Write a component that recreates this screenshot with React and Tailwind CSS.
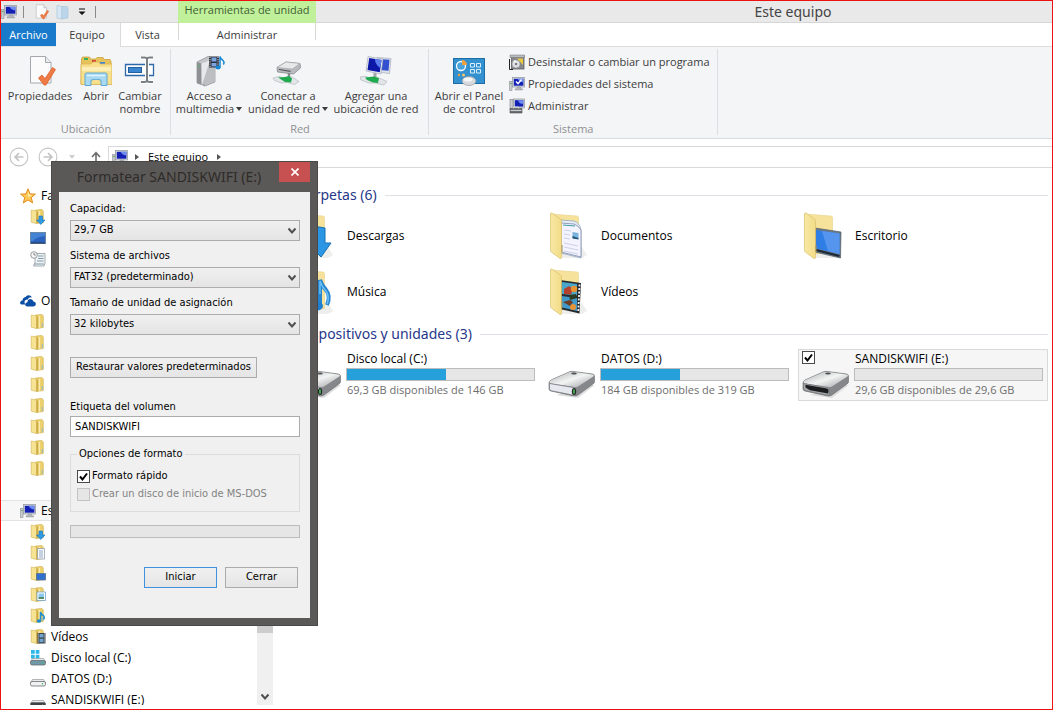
import React, { useState } from "react";

/* ---------- icons ---------- */

function ComputerIcon({ className = "h-4 w-4", children }) {
  return (
    <svg viewBox="0 0 16 16" className={className}>
      <rect x="0.5" y="5.5" width="2.5" height="9" fill="#c9ccd0" stroke="#8b8f94" strokeWidth="0.6" />
      <rect x="1" y="7" width="1.5" height="1" fill="#4caf50" />
      <rect x="3.5" y="1.5" width="12" height="9.5" fill="#d5d9de" stroke="#8e949b" strokeWidth="0.7" />
      <path d="M4.8 2.8h9.6v6.9H4.8z" fill="#1420b4" />
      <path d="M8.5 2.8h5.9v3.4c-3 .2-4.400-.8-5.900-3.400z" fill="#6f8df0" />
      <path d="M8 11h3.500v1.800h2V14h-7.500v-1.200H8z" fill="#b4b8bd" stroke="#83888e" strokeWidth="0.4" />
      {children}
    </svg>
  );
}

function PropertiesIcon({ className }) {
  return (
    <svg viewBox="0 0 32 32" className={className}>
      <path d="M6.500 1.500h15l5.500 6v20.500h-20.500z" fill="#fbfbfc" stroke="#a5a8ac" />
      <path d="M21.500 1.500v6H27" fill="#e8eaec" stroke="#a5a8ac" />
      <path d="M14.500 23l3.500-3 3 3.600L28.500 12.500l3 2L22 30h-2z" fill="#ee7a45" stroke="#d9622d" strokeWidth="0.8" />
    </svg>
  );
}

function OpenIcon() {
  return (
    <svg viewBox="0 0 32 32" className="h-8 w-8">
      <path d="M1.500 4l1-2h7l1 2h5.500l1-1.500h6l1 2h6l1 2V29H1z" fill="#e8c35c" stroke="#c99f3d" strokeWidth="0.8" />
      <rect x="4" y="3" width="4" height="2" fill="#35b35c" />
      <rect x="12" y="5" width="4" height="2" fill="#d8483f" />
      <rect x="20" y="7" width="5" height="2" fill="#3d84d8" />
      <path d="M1 9h10l2-2h6l1 2h12v20.500H1z" fill="#f8df8b" stroke="#d8b456" strokeWidth="0.8" />
      <path d="M2 12h29v4H2z" fill="#fdeeb5" />
      <path d="M5 30.500V19.500q0-1.500 1.500-1.500h19q1.500 0 1.500 1.500v11h-6V25q-5-1.500-10 0v5.500z" fill="#a9d9f2" stroke="#5fa9d4" />
      <path d="M7 20.500h18" stroke="#dff3fd" strokeWidth="1.500" />
    </svg>
  );
}

function RenameIcon() {
  return (
    <svg viewBox="0 0 32 32" className="h-8 w-8">
      <path d="M1.500 9.500h28v11h-28z" fill="#fff" stroke="#2f6aa8" strokeWidth="1.300" />
      <rect x="4.500" y="12.500" width="13" height="5" fill="#3b86d0" stroke="#215f9f" />
      <path d="M17 3h3.500q2 0 2.500 1.500Q23.500 3 25.500 3H29M23 4.500v21M17 27h3.500q2 0 2.500-1.500.5 1.500 2.500 1.500H29" fill="none" stroke="#fff" strokeWidth="4" />
      <path d="M17 2.500h3.500q2 0 2.500 1.500Q23.500 2.500 25.500 2.500H29M23 4v22M17 27h3.500q2 0 2.500-1.500.5 1.500 2.500 1.500H29" fill="none" stroke="#7a7f84" strokeWidth="2" />
    </svg>
  );
}

function MediaIcon() {
  return (
    <svg viewBox="0 0 32 32" className="h-8 w-8">
      <path d="M4 7l11-5.500 7 2V27l-10 4L4 28z" fill="#c3c5c8" stroke="#8a8c8f" strokeWidth="0.7" />
      <path d="M4 7l4.500 1.500L12 30.500 4 28z" fill="#8e9093" />
      <path d="M8.500 8.500L22 3.500V26.500L9 30z" fill="#bcbec1" />
      <path d="M8.500 8.500L17 5.300 10 27l-1.500 3z" fill="#e6e8e9" />
      <path d="M5.500 10v1.500" stroke="#38c95a" strokeWidth="1.200" />
      <rect x="16" y="1.500" width="10" height="11" fill="#2b2f3a" />
      <path d="M18.500 2.500h5v4h-5zM18.500 8h5v3.500h-5z" fill="#7aa3e0" />
      <path d="M17 2v10M25 2v10" stroke="#fff" strokeDasharray="1 1.200" />
      <path d="M27 12.500V1.500q.5 2.800 3 4 1.800 1.500.3 4" fill="none" stroke="#1689d6" strokeWidth="1.500" />
      <ellipse cx="25" cy="12.500" rx="2.600" ry="2" fill="#1689d6" />
    </svg>
  );
}

function NetDriveIcon() {
  return (
    <svg viewBox="0 0 32 32" className="h-8 w-8">
      <path d="M5 12.500L14 7l14 1.500.5 4.500-7 6L5.500 17z" fill="#b8babd" stroke="#7d8083" strokeWidth="0.7" />
      <path d="M5 12.500L14 7l14 1.500-7.500 5.500z" fill="#e6e8ea" stroke="#999" strokeWidth="0.5" />
      <path d="M7 14.500l11.500 1.800" stroke="#55585b" strokeWidth="1.200" />
      <path d="M17 18v5" stroke="#858a8e" strokeWidth="2.500" />
      <path d="M1 23l6-1.500 5 1.500 8-1 7 4.500-4.500 3-7-2-6 .5-7-2.500z" fill="#e3e6e8" stroke="#aab0b3" strokeWidth="0.6" />
      <path d="M6 22.500l7-.5 4-1 3 2.500-1 4-6-.5z" fill="#1faa50" />
    </svg>
  );
}

function NetPlaceIcon() {
  return (
    <svg viewBox="0 0 32 32" className="h-8 w-8">
      <path d="M17 2.500l14 1-1.500 15L18 17z" fill="#dfe3ea" stroke="#9aa3b2" strokeWidth="0.6" />
      <path d="M19 4l10.500.8-1 11L19 15z" fill="#3350d0" />
      <path d="M8 1.500L23 4l-2 15L6 16z" fill="#e8ebf0" stroke="#9aa3b2" strokeWidth="0.6" />
      <path d="M9.200 3L21.500 5l-1.700 12.300L7.500 15z" fill="#0e18a8" />
      <path d="M15 4l6.500 1-1.200 8Q15 9.500 15 4z" fill="#5a7ef0" />
      <path d="M15 18v4" stroke="#a3a7ab" strokeWidth="3" />
      <path d="M0 22q6-2 10 1l9 0 8 3.500-3 3.500-9-2-6 0-8-3z" fill="#e3e6e8" stroke="#aab0b3" strokeWidth="0.6" />
      <path d="M5 22.500l9-1 5 1.500-1 5-5-.5-6-2.500z" fill="#1faa50" />
    </svg>
  );
}

function ControlPanelIcon() {
  return (
    <svg viewBox="0 0 32 32" className="h-8 w-8">
      <rect x="0.5" y="3.500" width="31" height="25" fill="#3391cf" stroke="#1f6da5" />
      <circle cx="8" cy="11" r="4.500" fill="#4aa4dc" stroke="#fff" strokeWidth="1.300" />
      <path d="M9 10V5a5 5 0 0 1 5 5z" fill="#f2a03d" />
      <path d="M17.500 8.500h4v3.500h-4zM23.500 8.500h4v3.500h-4zM17.500 14.500h4v3.500h-4zM23.500 14.500h4v3.500h-4z" fill="none" stroke="#d9effc" />
      <circle cx="6" cy="20" r="1.200" fill="#f2a03d" />
      <circle cx="10.500" cy="20" r="1.500" fill="#f7c36b" />
      <ellipse cx="16" cy="26" rx="7" ry="4.500" fill="#d7dadd" stroke="#8d9296" strokeWidth="0.6" />
      <ellipse cx="15" cy="24.500" rx="4.500" ry="2" fill="#f5f6f7" />
    </svg>
  );
}

function UninstallIcon() {
  return (
    <svg viewBox="0 0 16 16" className="h-4 w-4">
      <rect x="2.500" y="1.500" width="12.500" height="13.500" fill="#85878b" stroke="#5d5f62" strokeWidth="0.8" />
      <path d="M1 1h14.500v2.500H1z" fill="#b9bbbe" stroke="#6f7174" strokeWidth="0.5" />
      <path d="M8 4.500h6V11z" fill="#e8c93f" />
      <circle cx="7" cy="10" r="4" fill="#dfe1e4" stroke="#8f9194" strokeWidth="0.6" />
      <path d="M7 10L4.500 7l2-1z" fill="#fff" />
      <circle cx="7" cy="10" r="1.200" fill="#77797c" />
      <path d="M0.500 5v10.500H4" fill="none" stroke="#222" />
    </svg>
  );
}

function ManageIcon() {
  return (
    <svg viewBox="0 0 16 16" className="h-4 w-4">
      <rect x="1" y="1.500" width="3" height="10" fill="#c9ccd0" stroke="#7f8388" strokeWidth="0.6" />
      <rect x="4.500" y="1" width="11" height="9" fill="#d5d9de" stroke="#8e949b" strokeWidth="0.7" />
      <path d="M5.800 2.200h8.500v6.400H5.800z" fill="#1420b4" />
      <path d="M9 2.200h5.300v3.600Q10 6 9 2.200z" fill="#6f8df0" />
      <path d="M1 10.500h12v4.500H1z" fill="#6c6f73" stroke="#494b4e" strokeWidth="0.6" />
      <path d="M4.500 10.500V9h5v1.500M1.500 12.500h11" fill="none" stroke="#d6d8da" strokeWidth="0.9" />
    </svg>
  );
}

function StarIcon() {
  return (
    <svg viewBox="0 0 16 16" className="h-4 w-4">
      <path d="M8 .8l2 5.100 5.400.2-4.200 3.500 1.500 5.300L8 12l-4.700 2.900 1.500-5.300L.6 6.100 6 5.900z" fill="#fcc955" stroke="#e08a1c" />
      <path d="M8 3.500l1.200 3.200 3 .2L8 9z" fill="#fff0b8" />
    </svg>
  );
}

function OneDriveIcon() {
  return (
    <svg viewBox="0 0 16 16" className="h-4 w-4">
      <path d="M1.500 11.500Q-.5 11 .3 9 1 7.500 2.500 7.600 2.600 4.500 5.500 4q1.200-2 3.500-1.800 2.200.3 3 2.300-3-.7-4.300 2Q4.500 6.500 4.500 9q0 1.800 1 2.500z" fill="#0a4fa5" />
      <path d="M7 13.500q-2-.3-1.900-2.200Q5.200 9.500 7.300 9.200q.1-2.700 2.700-3.200 2.700-.2 3.500 2.500 2.400.2 2.400 2.500-.1 2.300-2.400 2.500z" fill="#0a4fa5" />
    </svg>
  );
}

// small folder used in the tree; children are drawn on top of it
function SmallFolder({ children }) {
  return (
    <svg viewBox="0 0 16 16" className="h-4 w-4">
      <path d="M5.500 1L12 .5l1.300 1.500v11.500l-6.800 1z" fill="#ecd06c" stroke="#cfae4c" strokeWidth="0.6" />
      <path d="M1.200 1l5.300 1v12.500l-5.300-1.300z" fill="#f6e394" stroke="#d3b456" strokeWidth="0.6" />
      <path d="M7.200 2.500v11.800" stroke="#c09a35" />
      <path d="M9.500 2v11.800" stroke="#f8eab0" strokeWidth="1.200" />
      <path d="M12.300 9v4" stroke="#7bb6da" strokeWidth="0.8" />
      {children}
    </svg>
  );
}

function DesktopIcon() {
  return (
    <svg viewBox="0 0 16 16" className="h-4 w-4">
      <rect x="0.5" y="2.500" width="15" height="11" fill="#2a62bd" stroke="#6b87a8" />
      <path d="M1 3h14v3Q6 7 3 11H1z" fill="#4482d4" />
      <path d="M1 13h14" stroke="#23364d" />
    </svg>
  );
}

function RecentIcon() {
  return (
    <svg viewBox="0 0 16 16" className="h-4 w-4">
      <path d="M5 2.500h10v10l-1 2.500H3.500l1.500-3z" fill="#f2f4f5" stroke="#8d979e" strokeWidth="0.8" />
      <path d="M8 5h5.500M8 7.500h5.500M7 10h6.500M4 13h10" stroke="#7e98ab" />
      <circle cx="4" cy="4" r="3.300" fill="#f7f8f9" stroke="#7f868b" strokeWidth="0.8" />
      <path d="M4 2v2h1.800" fill="none" stroke="#555" strokeWidth="0.7" />
    </svg>
  );
}

function SmallDrive({ system, dark }) {
  return (
    <svg viewBox="0 0 16 16" className="h-4 w-4">
      {system && <path d="M1 0h3.700v3.700H1zM5.700 0h3.700v3.700H5.700zM1 4.700h3.700v3.700H1zM5.700 4.700h3.700v3.700H5.700z" fill="#2cb5ea" />}
      <path d="M2.500 8.500h11l2 3.500H.5z" fill="#e9ebec" stroke="#85898c" strokeWidth="0.6" />
      <rect x="0.5" y="10.500" width="15" height="4.500" rx="1.500" fill={dark ? "#3f4245" : system ? "#6f98a8" : "#f0f1f2"} stroke="#6a6d70" strokeWidth="0.8" />
      <path d="M12.500 12v1.500" stroke={dark ? "#777" : "#3fc26a"} strokeWidth="1.200" />
    </svg>
  );
}

const DownMark = <path d="M9 7h3.500v4H15l-4.200 4.500L6.500 11H9z" fill="#2f9be3" stroke="#1a74b8" strokeWidth="0.6" />;
const DocMark = (
  <g>
    <path d="M7.500 3.500h7v10.500h-7z" fill="#fafbfc" stroke="#8796a8" strokeWidth="0.7" />
    <path d="M9 6h4M9 8h4M9 10h4M9 12h4" stroke="#7a93b4" strokeWidth="0.8" />
  </g>
);
const ScreenMark = <path d="M6.500 7.500h9v6.500h-9z" fill="#2f6fd0" stroke="#5c6f88" strokeWidth="0.8" />;
const PhotoMark = (
  <g>
    <path d="M7 5h8.500v8.500H7z" fill="#fff" stroke="#6fa3c6" strokeWidth="0.8" />
    <path d="M8.500 6.500H14V10H8.500z" fill="#8cc8ee" />
    <path d="M8.500 10H14v2H8.500z" fill="#4f8f6a" />
  </g>
);
const NoteMark = (
  <g>
    <path d="M10.500 12.500V4q.5 2.500 2.800 3.500 1.700 1.500.2 4" fill="none" stroke="#1f8ccc" strokeWidth="1.500" />
    <ellipse cx="9" cy="13" rx="2.300" ry="1.800" fill="#1f8ccc" />
  </g>
);
const FilmMark = (
  <g>
    <path d="M7.500 4h8v10.500h-8z" fill="#39424c" />
    <path d="M9.500 5h4v3.500h-4zM9.500 9.800h4v3.500h-4z" fill="#6fa5cf" />
    <path d="M8.500 4.500v10M14.600 4.500v10" stroke="#eee" strokeWidth="0.8" strokeDasharray="1 1" />
  </g>
);

// large folder standing open, contents between the back and the cover
function BigFolder({ children }) {
  return (
    <svg viewBox="0 0 48 48" className="h-12 w-12">
      <defs>
        <linearGradient id="cover" x1="0" x2="1">
          <stop offset="0" stopColor="#f8e8a4" />
          <stop offset="1" stopColor="#f3dc88" />
        </linearGradient>
      </defs>
      <path d="M14 46l20 0 5-3-5-8H14z" fill="#eeeeec" />
      <path d="M3 2l26 2q1.500 0 1.500 1.500v35L13 42z" fill="#f6e29a" stroke="#e8d48c" strokeWidth="0.6" />
      {children}
      <path d="M2.500 2q0-1.500 1.500-1L12.500 7q1 .7 1 2v36.500q0 1.500-1.500 1L3.300 40q-.8-.5-.8-1.500z" fill="url(#cover)" stroke="#d9c06c" strokeWidth="0.7" />
      <path d="M14 33v7" stroke="#a8935c" />
    </svg>
  );
}

const BigDown = <path d="M19 14l12 2v15l6 0-10 14-13-13h5z" fill="#2b97e4" stroke="#1770b4" />;
const BigDocs = (
  <g>
    <path d="M13 8l13 1q6 2 7 9v28l-20-5z" fill="#e3edf6" stroke="#8ba1b8" strokeWidth="0.7" />
    <path d="M13 11l13 1q4 1 7 6v27l-20-5z" fill="#f3f4fd" stroke="#8b93b4" strokeWidth="0.9" />
    <path d="M15 13l12 1" stroke="#3c9aa8" />
    <path d="M24.500 20l6 1v6l-6-1z" fill="#7ab4dc" />
    <path d="M24.500 24l6 2v1.500l-6-1z" fill="#24587e" />
    <path d="M16 18l7 1M16 22l6 1M16 26l6 1M16 31l14 3M16 35l14 3M16 39l14 3" stroke="#cfd0ea" />
  </g>
);
const BigScreen = (
  <g>
    <path d="M13 16l26 4-.5 26L13 40z" fill="#6c7a88" stroke="#4d5a66" strokeWidth="0.7" />
    <path d="M14 18l23.500 3.500V42L14 36.500z" fill="#2e7ee6" />
    <path d="M20 18.900l17.500 2.600V42L26 39z" fill="#5595ee" />
    <path d="M14 38l23.500 6" stroke="#1c2733" strokeWidth="2" />
  </g>
);
const BigNote = (
  <g>
    <path d="M26 38V12q2 6 6 10 5 6 1 15" fill="none" stroke="#2784cf" strokeWidth="4" />
    <path d="M26 26V13q2 6 6 10 4 6 1 13" fill="none" stroke="#6cc0f4" strokeWidth="1.500" />
    <ellipse cx="23" cy="38" rx="6" ry="4.500" fill="#1f7fd0" />
  </g>
);
const BigFilm = (
  <g>
    <path d="M12 12l21 3-1.500 30.500L12 41z" fill="#26292e" />
    <path d="M14 14l15 2v11.500L14 26z" fill="#49a7cd" />
    <path d="M14 28l15 2v13l-15-3.500z" fill="#3f9ac9" />
    <path d="M16 21l5-3 4 3-2 5.500-7-.5z" fill="#b5402c" />
    <circle cx="26" cy="21" r="3.200" fill="#e89434" />
    <path d="M21 27l7-1 1 4-7 2z" fill="#2d3b22" />
    <circle cx="25" cy="39" r="3" fill="#e89434" />
    <path d="M15 34l7-2 3 2-3 4z" fill="#6b3b22" />
    <path d="M31.500 16.500l-1.300 28" stroke="#f2f2f2" strokeWidth="1.800" strokeDasharray="2 1.500" />
  </g>
);

function BigDrive({ removable }) {
  return (
    <svg viewBox="0 0 48 32" className="h-8 w-12">
      <defs>
        <linearGradient id="steel" x1="0" x2="1" y1="0" y2="1">
          <stop offset="0" stopColor="#a9abad" />
          <stop offset="0.5" stopColor="#f3f4f4" />
          <stop offset="1" stopColor="#9c9ea0" />
        </linearGradient>
      </defs>
      <path d="M8 27l22 3 17-13-5 0z" fill="#dedede" />
      <path d="M1 15q0-2 2-3L21 4q2-.8 4-.6L44.500 6q2 .4 2 2v5.500q0 1.500-1.500 2.500L30 27q-2 1.300-4 1L3 23q-2-.5-2-2z" fill="#85878a" stroke="#66686b" strokeWidth="0.6" />
      <path d="M1.500 14q0-1 1.500-1.700L21 4.300q2-.8 4-.5l19.500 2.700q2.500.6.500 2.200L30 18.500q-1.500.9-3.500.6L3.500 15.500q-2-.3-2-1.500z" fill="url(#steel)" />
      <path d="M1.500 15.500L27 19.800v7.700L3.500 22.800q-2-.4-2-2z" fill={removable ? "#a5a7a9" : "#e6e8f0"} stroke="#77797c" strokeWidth="0.7" />
      {removable ? (
        <path d="M3.500 16.800l21.500 3.700q2 .5 1.500 2.500l-.5 2.500L8 22.200l-4.500-2.700z" fill="#1c1d1f" />
      ) : (
        <g>
          <ellipse cx="26" cy="23.500" rx="2.200" ry="3.500" fill="#252a27" />
          <path d="M26 21.500v4" stroke="#4fce62" strokeWidth="1.500" />
        </g>
      )}
      <ellipse cx="26" cy="5.500" rx="2.800" ry="1" fill="#4b4d50" />
    </svg>
  );
}

function Triangle({ side, className = "" }) {
  return (
    <svg viewBox="0 0 6 6" className={`inline-block h-[6px] w-[6px] ${className}`}>
      <path d={side === "right" ? "M1 0l4 3-4 3z" : "M0 1h6L3 5z"} fill="currentColor" />
    </svg>
  );
}

/* ---------- ribbon ---------- */

function RibbonGroup({ title, className = "", children }) {
  return (
    <section className="relative flex flex-col pt-2">
      <div className={`flex flex-1 items-start ${className}`}>{children}</div>
      <h2 className="pb-[2px] text-center leading-[14px] text-[#8e9092]">{title}</h2>
      <span className="absolute top-[2px] right-0 bottom-[3px] w-px bg-[#dcdfe2]" />
    </section>
  );
}

function BigButton({ icon, lines, menu, className }) {
  return (
    <button className={`flex flex-col items-center whitespace-nowrap leading-[13px] ${className}`}>
      {icon}
      <span className="mt-[2px] block">{lines[0]}</span>
      <span className="block">
        {lines[1]}
        {menu && <Triangle className="mb-[2px] ml-[2px]" />}
      </span>
    </button>
  );
}

function Ribbon() {
  const links = [
    { icon: <UninstallIcon />, text: "Desinstalar o cambiar un programa" },
    {
      icon: <ComputerIcon><path d="M7 5.500l2 2.200 3.500-4.200" fill="none" stroke="#fff" strokeWidth="1.500" /></ComputerIcon>,
      text: "Propiedades del sistema",
    },
    { icon: <ManageIcon />, text: "Administrar" },
  ];
  return (
    <div className="flex h-[92px] shrink-0 border-b border-[#d8dadc] bg-[#f4f5f7]">
      <RibbonGroup title="Ubicación" className="pr-[9px] pl-[5px]">
        <BigButton className="w-[68px]" icon={<PropertiesIcon className="h-8 w-8" />} lines={["Propiedades"]} />
        <BigButton className="w-11" icon={<OpenIcon />} lines={["Abrir"]} />
        <BigButton className="w-11" icon={<RenameIcon />} lines={["Cambiar", "nombre"]} />
      </RibbonGroup>
      <RibbonGroup title="Red" className="gap-[2px] pr-2 pl-[2px]">
        <BigButton className="w-[72px]" icon={<MediaIcon />} lines={["Acceso a", "multimedia"]} menu />
        <BigButton className="w-[82px]" icon={<NetDriveIcon />} lines={["Conectar a", "unidad de red"]} menu />
        <BigButton className="w-[90px]" icon={<NetPlaceIcon />} lines={["Agregar una", "ubicación de red"]} />
      </RibbonGroup>
      <RibbonGroup title="Sistema" className="gap-1 pr-2 pl-1">
        <BigButton className="w-[72px]" icon={<ControlPanelIcon />} lines={["Abrir el Panel", "de control"]} />
        <ul className="-mt-1">
          {links.map((l) => (
            <li key={l.text}>
              <button className="flex h-[22px] items-center gap-[3px] whitespace-nowrap">
                {l.icon}
                {l.text}
              </button>
            </li>
          ))}
        </ul>
      </RibbonGroup>
    </div>
  );
}

function TitleBar() {
  return (
    <header className="flex h-[22px] shrink-0 bg-[#e9e9e9]">
      <div className="flex w-[177px] items-center border-b border-[#d5d6d7]">
        <ComputerIcon />
        <span className="ml-[6px] h-3 w-px bg-[#8a8a8a]" />
        <button className="ml-[9px]" aria-label="Propiedades"><PropertiesIcon className="h-4 w-4" /></button>
        <button className="ml-[6px]" aria-label="Nueva carpeta">
          <svg viewBox="0 0 16 16" className="h-4 w-4">
            <path d="M2 1.500l5 1V15l-5-1z" fill="#d6e6f4" stroke="#aac5dd" strokeWidth="0.7" />
            <path d="M7 2.500h5l1 1V14l-6 1z" fill="#bcd5ea" stroke="#aac5dd" strokeWidth="0.7" />
          </svg>
        </button>
        <button className="ml-[7px]" aria-label="Personalizar">
          <svg viewBox="0 0 8 8" className="h-2 w-2"><path d="M1 .5h6v1H1zM.5 3.500h7L4 7z" fill="#111" /></svg>
        </button>
        <span className="ml-[9px] h-3 w-px bg-[#8a8a8a]" />
      </div>
      <div className="w-[138px] bg-[#c1f09a] text-center leading-[18px] text-[#3f6136]">Herramientas de unidad</div>
      <h1 className="flex-1 border-b border-[#d5d6d7] pl-[218px] text-center font-[Noto_Sans] text-[14px] leading-[21px] text-[#444]">
        Este equipo
      </h1>
    </header>
  );
}

function Tabs() {
  return (
    <nav className="flex h-6 shrink-0 bg-white leading-[24px]">
      <button className="w-[55px] border-b border-[#e0e2e4] bg-[#1979ca] text-white">Archivo</button>
      <button className="w-[65px] border-r border-[#dadbdc] bg-[#f4f5f7] pr-[2px]">Equipo</button>
      <button className="w-[57px] border-b border-[#dadbdc] pr-[4px]">Vista</button>
      <div className="flex w-[138px] justify-between border-b border-[#dadbdc]">
        <span className="h-[17px] w-px bg-linear-to-b from-[#d2dccb] to-[#d6d6d6]" />
        <button className="flex-1">Administrar</button>
        <span className="h-[17px] w-px bg-linear-to-b from-[#d2dccb] to-[#d6d6d6]" />
      </div>
      <div className="flex-1 border-b border-[#dadbdc]" />
    </nav>
  );
}

function AddressBar() {
  return (
    <div className="flex shrink-0 items-center pt-[7px] pl-2">
      {["M13 9H5.500M9 5.500L5.500 9 9 12.500", "M5 9h7.500M9 5.500L12.500 9 9 12.500"].map((d, i) => (
        <button key={d} className="mr-[9px] w-5" aria-label={i ? "Adelante" : "Atrás"}>
          <svg viewBox="0 0 18 18" className="h-5 w-5" fill="none" stroke="#c4c4c4" strokeWidth="1.500">
            <circle cx="9" cy="9" r="8" strokeWidth="1" />
            <path d={d} />
          </svg>
        </button>
      ))}
      <Triangle className="ml-[2px] text-[#cfcfcf]" />
      <button className="ml-[15px]" aria-label="Subir">
        <svg viewBox="0 0 12 12" className="h-3 w-3" fill="none" stroke="#6a6a6a" strokeWidth="1.600">
          <path d="M6 11.500V2M2 6l4-4.300L10 6" />
        </svg>
      </button>
      <div className="ml-[6px] flex h-[22px] flex-1 items-center border-y border-l border-[#d9d9d9] pl-[3px] text-black">
        <ComputerIcon />
        <Triangle side="right" className="ml-[6px] text-[#555]" />
        <a href="#equipo" className="ml-2">Este equipo</a>
        <Triangle side="right" className="ml-2 text-[#555]" />
      </div>
    </div>
  );
}

/* ---------- navigation tree ---------- */

function TreeHead({ icon, text, selected }) {
  return (
    <a
      href="#tree"
      className={`flex h-[21px] items-center gap-[5px] pl-[19px] ${selected ? "border-y border-[#e3e3e3] bg-[#f7f7f7]" : ""}`}
    >
      {icon}
      {text}
    </a>
  );
}

function TreeItem({ icon, text }) {
  return (
    <a href="#tree" className="flex h-[21px] items-center gap-[5px] pl-[29px] whitespace-nowrap">
      {icon}
      {text}
    </a>
  );
}

function Sidebar() {
  const favorites = [
    { text: "Descargas", icon: <SmallFolder>{DownMark}</SmallFolder> },
    { text: "Escritorio", icon: <DesktopIcon /> },
    { text: "Sitios recientes", icon: <RecentIcon /> },
  ];
  const computer = [
    { text: "Descargas", icon: <SmallFolder>{DownMark}</SmallFolder> },
    { text: "Documentos", icon: <SmallFolder>{DocMark}</SmallFolder> },
    { text: "Escritorio", icon: <SmallFolder>{ScreenMark}</SmallFolder> },
    { text: "Imágenes", icon: <SmallFolder>{PhotoMark}</SmallFolder> },
    { text: "Música", icon: <SmallFolder>{NoteMark}</SmallFolder> },
    { text: "Vídeos", icon: <SmallFolder>{FilmMark}</SmallFolder> },
    { text: "Disco local (C:)", icon: <SmallDrive system /> },
    { text: "DATOS (D:)", icon: <SmallDrive /> },
    { text: "SANDISKWIFI (E:)", icon: <SmallDrive dark /> },
  ];
  return (
    <aside className="mb-1 flex w-[272px] shrink-0 overflow-hidden text-[12px] text-black">
      <div className="flex-1 pt-[17px]">
        <TreeHead icon={<StarIcon />} text="Favoritos" />
        {favorites.map((f) => <TreeItem key={f.text} {...f} />)}
        <div className="mt-[21px]">
          <TreeHead icon={<OneDriveIcon />} text="OneDrive" />
          {[1, 2, 3, 4, 5, 6, 7, 8].map((n) => <TreeItem key={n} icon={<SmallFolder />} />)}
        </div>
        <div className="mt-[21px]">
          <TreeHead icon={<ComputerIcon />} text="Este equipo" selected />
          {computer.map((f) => <TreeItem key={f.text} {...f} />)}
        </div>
      </div>
      <div className="flex w-4 flex-col bg-[#f0f0f0]">
        <div className="mt-4 flex-1 bg-[#cdcdcd]" />
        <button className="flex h-[72px] items-end justify-center pb-1" aria-label="Bajar">
          <svg viewBox="0 0 10 8" className="h-2 w-[10px]"><path d="M1.500 1.500L5 5.500l3.500-4" fill="none" stroke="#505050" strokeWidth="2" /></svg>
        </button>
      </div>
    </aside>
  );
}

/* ---------- content ---------- */

function CheckBox({ id, checked, onChange, disabled, label }) {
  return (
    <span className="relative h-[13px] w-[13px] shrink-0">
      <input
        id={id}
        type="checkbox"
        aria-label={label}
        checked={checked}
        onChange={onChange}
        disabled={disabled}
        className="block h-[13px] w-[13px] appearance-none border border-[#4a4a4a] bg-white disabled:border-[#c3c3c3] disabled:bg-[#e6e6e6]"
      />
      {checked && (
        <svg viewBox="0 0 13 13" className="pointer-events-none absolute inset-0">
          <path d="M3 6.500l2.500 3L10 3.500" fill="none" stroke="#000" strokeWidth="2" />
        </svg>
      )}
    </span>
  );
}

function SectionTitle({ children }) {
  return (
    <h2 className="flex items-center gap-2 pl-2 font-[Noto_Sans] text-[14px] leading-[20px] whitespace-nowrap text-[#27388a]">
      {children}
      <span className="h-px flex-1 bg-[#dfe1e6]" />
    </h2>
  );
}

function Drive({ name, info, used, removable }) {
  const [checked, setChecked] = useState(true);
  return (
    <div className={`flex h-[52px] gap-1 border pr-1 pl-[3px] ${removable ? "border-[#d9d9d9] bg-[#f6f6f6]" : "border-transparent"}`}>
      <div className="flex flex-col justify-between pt-px">
        {removable ? (
          <CheckBox label={name} checked={checked} onChange={() => setChecked(!checked)} />
        ) : <span />}
        <BigDrive removable={removable} />
      </div>
      <div className="min-w-0 flex-1 whitespace-nowrap">
        <p className="pl-px text-[12px] leading-[18px] text-black">{name}</p>
        <div className="h-[13px] border border-[#bcbcbc] bg-[#e6e6e6]">
          <div className="h-full bg-[#26a0da]" style={{ width: `${used}%` }} />
        </div>
        <p className="pl-px leading-[18px] text-[#6d6d6d]">{info}</p>
      </div>
    </div>
  );
}

function Content() {
  const folders = [
    { name: "Descargas", art: BigDown },
    { name: "Documentos", art: BigDocs },
    { name: "Escritorio", art: BigScreen },
    { name: "Música", art: BigNote },
    { name: "Vídeos", art: BigFilm },
  ];
  return (
    <main className="min-w-0 flex-1 pt-[17px] pr-1 pl-[17px]">
      <SectionTitle>Carpetas (6)</SectionTitle>
      <div className="mt-[3px] grid grid-cols-3 gap-x-1">
        {folders.map((f) => (
          <div key={f.name} className="flex h-14 items-center gap-[5px] pl-1 text-[12px] text-black">
            <BigFolder>{f.art}</BigFolder>
            {f.name}
          </div>
        ))}
      </div>
      <div className="mt-1">
        <SectionTitle>Dispositivos y unidades (3)</SectionTitle>
      </div>
      <div className="mt-[5px] grid grid-cols-3 gap-x-1">
        <Drive name="Disco local (C:)" info="69,3 GB disponibles de 146 GB" used={53} />
        <Drive name="DATOS (D:)" info="184 GB disponibles de 319 GB" used={42} />
        <Drive name="SANDISKWIFI (E:)" info="29,6 GB disponibles de 29,6 GB" used={0} removable />
      </div>
    </main>
  );
}

/* ---------- format dialog ---------- */

function SelectField({ id, label, value }) {
  return (
    <div>
      <label htmlFor={id} className="mb-1 block leading-[14px]">{label}</label>
      <div className="relative">
        <select
          id={id}
          defaultValue={value}
          className="block h-[21px] w-full appearance-none border border-[#acacac] bg-linear-to-b from-[#f0f0f0] to-[#e4e4e4] pl-[3px]"
        >
          <option>{value}</option>
        </select>
        <svg viewBox="0 0 10 8" className="pointer-events-none absolute top-[7px] right-[3px] h-2 w-[10px]">
          <path d="M1.500 1.500L5 5.500l3.500-4" fill="none" stroke="#505050" strokeWidth="2" />
        </svg>
      </div>
    </div>
  );
}

function DialogButton({ className, ...props }) {
  return <button className={"h-[21px] border bg-linear-to-b from-[#f0f0f0] to-[#e5e5e5] whitespace-nowrap " + className} {...props} />;
}

function FormatDialog() {
  const [label, setLabel] = useState("SANDISKWIFI");
  const [quick, setQuick] = useState(true);

  return (
    <div
      role="dialog"
      aria-label="Formatear SANDISKWIFI (E:)"
      className="absolute top-[160px] left-[50px] w-[267px] border border-[#4b4948] bg-[#5b5957] px-[7px] pb-[7px] font-['DejaVu_Sans_Condensed','DejaVu_Sans',sans-serif] text-[11px] text-black"
    >
      <div className="flex h-[30px] items-start">
        <h2 className="flex-1 text-center font-[Noto_Sans] text-[14px] leading-[29px] text-[#2e2b29]">Formatear SANDISKWIFI (E:)</h2>
        <button className="flex h-[20px] w-[31px] items-center justify-center bg-[#c75050]" aria-label="Cerrar ventana">
          <svg viewBox="0 0 8 8" className="h-2 w-2"><path d="M.5.5l7 7M7.500.5l-7 7" stroke="#fff" strokeWidth="1.600" /></svg>
        </button>
      </div>
      <form className="bg-[#f0f0f0] pt-[10px] pr-[10px] pb-[30px] pl-[11px]" onSubmit={(e) => e.preventDefault()}>
        <div className="flex flex-col gap-2">
          <SelectField id="capacity" label="Capacidad:" value="29,7 GB" />
          <SelectField id="fs" label="Sistema de archivos" value="FAT32 (predeterminado)" />
          <SelectField id="unit" label="Tamaño de unidad de asignación" value="32 kilobytes" />
        </div>
        <DialogButton type="button" className="mt-[22px] w-[187px] border-[#acacac]">
          Restaurar valores predeterminados
        </DialogButton>
        <label htmlFor="volume" className="mt-[22px] mb-[2px] block leading-[14px]">Etiqueta del volumen</label>
        <input
          id="volume"
          value={label}
          onChange={(e) => setLabel(e.target.value)}
          className="block h-[21px] w-full border border-[#acacac] bg-white px-1"
        />
        <fieldset className="mt-[10px] border border-[#dcdcdc] px-[6px] pb-2">
          <legend className="px-[2px] leading-[14px]">Opciones de formato</legend>
          <div className="mt-[6px] flex h-[18px] items-center gap-[2px]">
            <CheckBox id="quick" checked={quick} onChange={() => setQuick(!quick)} />
            <label htmlFor="quick">Formato rápido</label>
          </div>
          <div className="flex h-[18px] items-center gap-[2px] whitespace-nowrap text-[#838383]">
            <CheckBox id="msdos" checked={false} disabled onChange={() => {}} />
            <label htmlFor="msdos">Crear un disco de inicio de MS-DOS</label>
          </div>
        </fieldset>
        <div role="progressbar" aria-label="Progreso" className="mt-[13px] h-[13px] border border-[#bcbcbc] bg-[#e6e6e6]" />
        <div className="mt-[29px] flex justify-end gap-2 pr-[2px]">
          <DialogButton type="submit" className="w-[73px] border-[#3d93e0]">Iniciar</DialogButton>
          <DialogButton type="button" className="w-[73px] border-[#acacac]">Cerrar</DialogButton>
        </div>
      </form>
    </div>
  );
}

export default function App() {
  return (
    <div className="relative flex h-screen flex-col overflow-hidden border border-[#e11] bg-white font-['Open_Sans','Noto_Sans',sans-serif] text-[11px] text-[#3c3c3c]">
      <TitleBar />
      <Tabs />
      <Ribbon />
      <AddressBar />
      <div className="flex min-h-0 flex-1">
        <Sidebar />
        <Content />
      </div>
      <FormatDialog />
    </div>
  );
}
